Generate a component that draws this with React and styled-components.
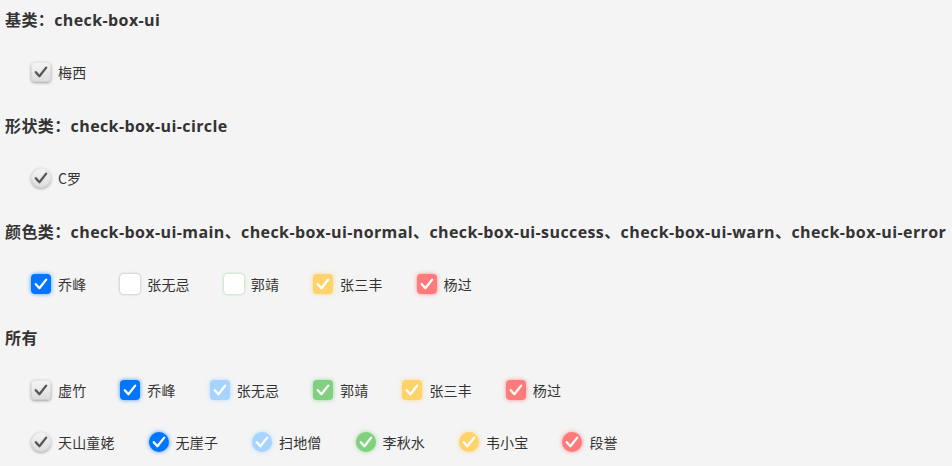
import React from "react";
import styled, { createGlobalStyle, css } from "styled-components";

const Global = createGlobalStyle`
  html, body { margin: 0; padding: 0; background: #f4f4f4; }
  body {
    font-family: "Open Sans", "Noto Sans CJK SC", sans-serif;
    color: #333;
  }
`;

const Page = styled.div`
  display: flex;
  flex-direction: column;
  align-items: flex-start;
  padding: 0 5px;
`;

const Heading = styled.h4`
  margin: 8px 0 30px;
  font-size: 16px;
  line-height: 24px;
  font-weight: 700;
  color: #333;
  white-space: nowrap;
  letter-spacing: 0.4px;
`;

const Row = styled.div`
  display: flex;
  align-items: center;
  height: 20px;
  padding-left: 26px;
  margin-bottom: ${(p) => (p.$tight ? "32px" : "24px")};
`;

const Item = styled.label`
  display: inline-flex;
  align-items: center;
  margin-right: 34px;
  font-size: 14px;
  line-height: 20px;
  letter-spacing: 0.15px;
  color: #333;
  font-family: "Noto Sans CJK SC", sans-serif;
`;

const palettes = {
  base: {
    bg: "linear-gradient(#f6f6f6, #dcdcdc)",
    shadow: "0 1px 3px rgba(0,0,0,0.35)",
    check: "#555",
  },
  main: { bg: "#0076ff", shadow: "0 0 4px rgba(0,118,255,0.7)", check: "#fff" },
  light: { bg: "#a6d4ff", shadow: "0 0 4px rgba(166,212,255,0.8)", check: "#fff" },
  success: { bg: "#80d080", shadow: "0 0 4px rgba(128,208,128,0.8)", check: "#fff" },
  warn: { bg: "#ffd36b", shadow: "0 0 4px rgba(255,211,107,0.8)", check: "#fff" },
  error: { bg: "#ff7b7b", shadow: "0 0 4px rgba(255,123,123,0.8)", check: "#fff" },
  emptyNormal: { bg: "#fff", shadow: "0 0 3px rgba(0,0,0,0.3)", check: "transparent" },
  emptySuccess: { bg: "#fff", shadow: "0 0 3px rgba(110,200,110,0.7)", check: "transparent" },
};

const Box = styled.span`
  flex: none;
  width: 20px;
  height: 20px;
  margin-right: 7px;
  display: inline-flex;
  align-items: center;
  justify-content: center;
  border-radius: ${(p) => (p.$circle ? "50%" : "4px")};
  background: ${(p) => palettes[p.$kind].bg};
  box-shadow: ${(p) => palettes[p.$kind].shadow};
  ${(p) =>
    p.$kind === "base" &&
    css`
      box-shadow: 0 1px 3px rgba(0, 0, 0, 0.35), inset 0 0 0 1px rgba(0, 0, 0, 0.06);
    `}
`;

function Check({ kind, circle, children }) {
  const color = palettes[kind].check;
  return (
    <Item>
      <Box $kind={kind} $circle={circle}>
        {color !== "transparent" && (
          <svg width="20" height="20" viewBox="0 0 20 20">
            <path
              d="M4.8 10.2 L8.4 14.2 L15.2 5.6"
              fill="none"
              stroke={color}
              strokeWidth="2.3"
              strokeLinecap="round"
              strokeLinejoin="round"
            />
          </svg>
        )}
      </Box>
      {children}
    </Item>
  );
}

export default function App() {
  return (
    <Page>
      <Global />
      <Heading>基类：check-box-ui</Heading>
      <Row>
        <Check kind="base">梅西</Check>
      </Row>
      <Heading>形状类：check-box-ui-circle</Heading>
      <Row>
        <Check kind="base" circle>C罗</Check>
      </Row>
      <Heading>
        颜色类：check-box-ui-main、check-box-ui-normal、check-box-ui-success、check-box-ui-warn、check-box-ui-error
      </Heading>
      <Row>
        <Check kind="main">乔峰</Check>
        <Check kind="emptyNormal">张无忌</Check>
        <Check kind="emptySuccess">郭靖</Check>
        <Check kind="warn">张三丰</Check>
        <Check kind="error">杨过</Check>
      </Row>
      <Heading>所有</Heading>
      <Row $tight>
        <Check kind="base">虚竹</Check>
        <Check kind="main">乔峰</Check>
        <Check kind="light">张无忌</Check>
        <Check kind="success">郭靖</Check>
        <Check kind="warn">张三丰</Check>
        <Check kind="error">杨过</Check>
      </Row>
      <Row>
        <Check kind="base" circle>天山童姥</Check>
        <Check kind="main" circle>无崖子</Check>
        <Check kind="light" circle>扫地僧</Check>
        <Check kind="success" circle>李秋水</Check>
        <Check kind="warn" circle>韦小宝</Check>
        <Check kind="error" circle>段誉</Check>
      </Row>
    </Page>
  );
}
